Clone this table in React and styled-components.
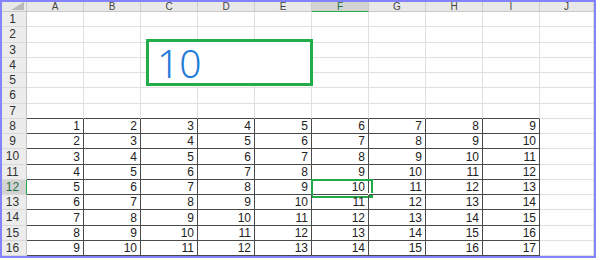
import React from 'react'
import styled, { createGlobalStyle, css } from 'styled-components'

const GlobalStyle = createGlobalStyle`
  html, body { margin: 0; padding: 0; background: #fff; }
  body { font-family: "Liberation Sans", Arial, sans-serif; }
`

const COLS = ['A', 'B', 'C', 'D', 'E', 'F', 'G', 'H', 'I', 'J']
const ROWS = Array.from({ length: 16 }, (_, i) => i + 1)
const GREEN = '#21a847'
const DARK = '#4a4a4a'

const Frame = styled.div`
  position: relative;
  width: 592px;
  height: 254px;
  border: 2px solid #8383fb;
  overflow: hidden;
`

const Sheet = styled.div`
  display: grid;
  grid-template-columns: 25px repeat(9, 57px) 1fr;
  grid-template-rows: 10px repeat(16, 15.25px);
  height: 100%;
`

const Corner = styled.div`
  background: #e8e8e8;
  border-right: 1px solid #c9c9c9;
  border-bottom: 1px solid #c9c9c9;
  box-sizing: border-box;
  display: flex;
  justify-content: flex-end;
  align-items: flex-end;
  padding: 0 2px 1px 0;
`

// column letters sit low in a short header strip
const ColHead = styled.div`
  box-sizing: border-box;
  background: ${p => (p.$active ? '#d3d3d3' : '#e8e8e8')};
  border-right: 1px solid #cdcdcd;
  border-bottom: 1px solid ${p => (p.$active ? GREEN : '#c9c9c9')};
  color: ${p => (p.$active ? '#1e7145' : '#444')};
  font-size: 10px;
  line-height: 9px;
  text-align: center;
`

const RowHead = styled.div`
  box-sizing: border-box;
  background: ${p => (p.$active ? '#d3d3d3' : '#ececec')};
  border-right: 1px solid ${p => (p.$active ? GREEN : '#c2c2c2')};
  border-bottom: 1px solid #d9d9d9;
  color: ${p => (p.$active ? '#1e7145' : '#333')};
  font-size: 12px;
  display: flex;
  align-items: center;
  justify-content: center;
  padding-right: 3px;
`

const Cell = styled.div`
  position: relative;
  box-sizing: border-box;
  border-right: 1px solid #e0e0e0;
  border-bottom: 1px solid ${p => (p.$edge ? DARK : '#e0e0e0')};
  font-size: 12px;
  color: #222;
  display: flex;
  align-items: flex-end;
  justify-content: flex-end;
  padding: 0 3px 0 0;
  line-height: 14px;
  ${p =>
    p.$boxed &&
    css`
      border-right-color: ${DARK};
      border-bottom-color: ${DARK};
    `}
`

const Selection = styled.div`
  position: absolute;
  left: -1px;
  top: -1px;
  right: -5px;
  bottom: -4px;
  border: 2px solid ${GREEN};
  pointer-events: none;
  &::after {
    content: '';
    position: absolute;
    right: -3px;
    bottom: -3px;
    width: 4px;
    height: 4px;
    background: ${GREEN};
    border: 1px solid #fff;
  }
`

const TextBox = styled.div`
  position: absolute;
  left: 144px;
  top: 37px;
  width: 153px;
  height: 41px;
  border: 3px solid #23ad4a;
  background: #fff;
  color: #1f7bd6;
  font-family: "Noto Sans", "Open Sans", sans-serif;
  font-weight: 300;
  font-size: 39px;
  line-height: 41px;
  padding-left: 8px;
`

function valueAt(row, colIdx) {
  if (row < 8 || colIdx > 8) return ''
  return row - 8 + colIdx + 1
}

export default function App() {
  return (
    <>
      <GlobalStyle />
      <Frame>
        <Sheet>
          <Corner>
            <svg width="13" height="8" viewBox="0 0 13 8">
              <polygon points="13,0 13,8 0,8" fill="#b9b9b9" />
            </svg>
          </Corner>
          {COLS.map(c => (
            <ColHead key={c} $active={c === 'F'}>
              {c}
            </ColHead>
          ))}
          {ROWS.map(r => (
            <React.Fragment key={r}>
              <RowHead $active={r === 12}>{r}</RowHead>
              {COLS.map((c, ci) => {
                const inData = r >= 8 && ci <= 8
                return (
                  <Cell key={c} $boxed={inData} $edge={r === 7 && ci <= 8}>
                    {valueAt(r, ci)}
                    {r === 12 && c === 'F' && <Selection />}
                  </Cell>
                )
              })}
            </React.Fragment>
          ))}
        </Sheet>
        <TextBox>10</TextBox>
      </Frame>
    </>
  )
}
